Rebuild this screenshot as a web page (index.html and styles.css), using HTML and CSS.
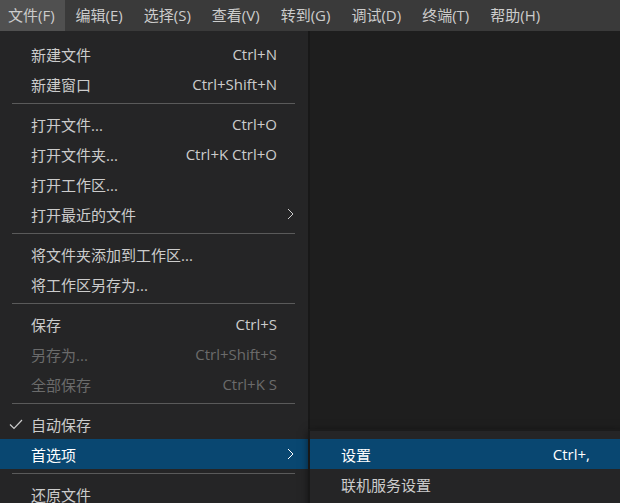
FILE: index.html
```html
<!DOCTYPE html>
<html lang="zh-CN">
<head>
<meta charset="utf-8">
<link rel="stylesheet" href="styles.css">
</head>
<body>
<div class="window">
  <nav class="menubar">
    <span class="mb-item active">文件(F)</span>
    <span class="mb-item">编辑(E)</span>
    <span class="mb-item">选择(S)</span>
    <span class="mb-item">查看(V)</span>
    <span class="mb-item">转到(G)</span>
    <span class="mb-item">调试(D)</span>
    <span class="mb-item">终端(T)</span>
    <span class="mb-item">帮助(H)</span>
  </nav>
  <div class="workbench">
    <ul class="menu">
      <li class="item"><span class="label">新建文件</span><span class="key">Ctrl+N</span></li>
      <li class="item"><span class="label">新建窗口</span><span class="key">Ctrl+Shift+N</span></li>
      <li class="sep"></li>
      <li class="item"><span class="label">打开文件...</span><span class="key">Ctrl+O</span></li>
      <li class="item"><span class="label">打开文件夹...</span><span class="key">Ctrl+K Ctrl+O</span></li>
      <li class="item"><span class="label">打开工作区...</span></li>
      <li class="item"><span class="label">打开最近的文件</span><svg class="arrow" viewBox="0 0 7 12" width="7" height="12"><polyline points="1,1 6,6 1,11" fill="none" stroke="currentColor" stroke-width="1"/></svg></li>
      <li class="sep"></li>
      <li class="item"><span class="label">将文件夹添加到工作区...</span></li>
      <li class="item"><span class="label">将工作区另存为...</span></li>
      <li class="sep"></li>
      <li class="item"><span class="label">保存</span><span class="key">Ctrl+S</span></li>
      <li class="item disabled"><span class="label">另存为...</span><span class="key">Ctrl+Shift+S</span></li>
      <li class="item disabled"><span class="label">全部保存</span><span class="key">Ctrl+K S</span></li>
      <li class="sep"></li>
      <li class="item"><svg class="check" viewBox="0 0 14 11" width="14" height="11"><polyline points="1,5.5 5,9.5 13,1" fill="none" stroke="currentColor" stroke-width="1.2"/></svg><span class="label">自动保存</span></li>
      <li class="item selected has-sub"><span class="label">首选项</span><svg class="arrow" viewBox="0 0 7 12" width="7" height="12"><polyline points="1,1 6,6 1,11" fill="none" stroke="currentColor" stroke-width="1"/></svg>
        <ul class="menu submenu">
          <li class="item selected"><span class="label">设置</span><span class="key">Ctrl+,</span></li>
          <li class="item"><span class="label">联机服务设置</span></li>
        </ul>
      </li>
      <li class="sep"></li>
      <li class="item"><span class="label">还原文件</span></li>
    </ul>
    <div class="editor"></div>
  </div>
</div>
</body>
</html>
```
FILE: styles.css
```css
html, body {
  margin: 0;
  padding: 0;
}
body {
  width: 620px;
  height: 503px;
  overflow: hidden;
  background: #1e1e1e;
  font-family: "Open Sans", "Noto Sans CJK SC", sans-serif;
  font-size: 15px;
  color: #cccccc;
}
.window {
  display: flex;
  flex-direction: column;
  height: 503px;
}
.menubar {
  display: flex;
  gap: 3px;
  height: 31px;
  background: #3a3a3a;
  flex: none;
}
.mb-item {
  display: flex;
  align-items: center;
  padding: 0 10px 3px 8px;
  white-space: nowrap;
  color: #cccccc;
}
.mb-item.active {
  background: #505050;
}
.workbench {
  flex: 1;
  display: flex;
  min-height: 0;
}
.menu {
  list-style: none;
  margin: 0;
  padding: 8px 0 0 0;
  width: 308px;
  background: #252526;
  border-right: 2px solid #181818;
  flex: none;
}
.editor {
  flex: 1;
  background: #1e1e1e;
}
.item {
  position: relative;
  display: grid;
  grid-template-columns: 31px 1fr auto 31px;
  align-items: center;
  height: 30px;
  white-space: nowrap;
}
.item .label {
  grid-column: 2;
}
.item .key {
  grid-column: 3;
}
.item .check {
  grid-column: 1;
  justify-self: start;
  margin-left: 9px;
  color: #cccccc;
}
.item .arrow {
  grid-column: 4;
  margin-left: 10px;
}
.item.disabled {
  color: #6b6b6b;
}
.item.selected {
  background: #094771;
  color: #ffffff;
}
.sep {
  height: 1px;
  margin: 4px 13px 5px 12px;
  background: #5a5a5a;
}
.submenu {
  position: absolute;
  left: 308px;
  top: -10px;
  width: 310px;
  padding: 8px 0 10px 0;
  border-left: 2px solid #181818;
  border-top: 2px solid #1b1b1b;
  border-right: 2px solid #1b1b1b;
  color: #cccccc;
  box-shadow: 0 2px 8px rgba(0,0,0,0.5);
}
.submenu .item {
  grid-template-columns: 31px 1fr auto 30px;
}
.submenu .item.selected {
  color: #ffffff;
}
```
